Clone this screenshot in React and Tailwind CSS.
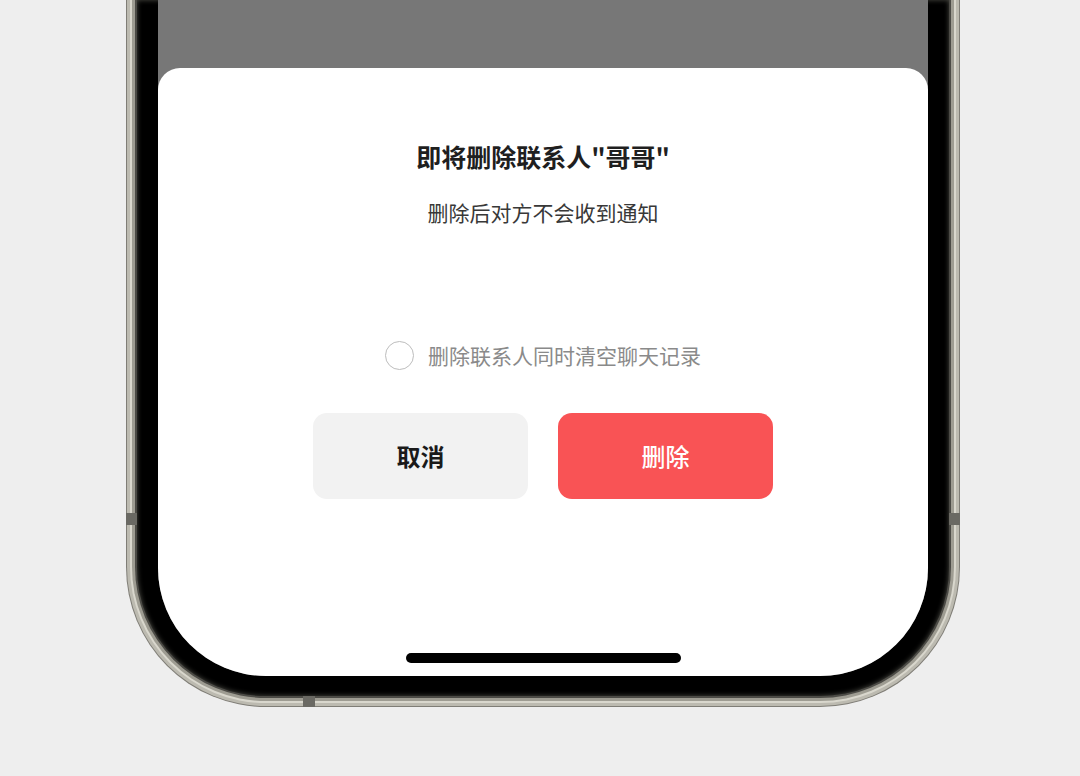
import React from 'react';

const Antenna = ({ className }) => (
    <div className={`absolute bg-[#6a6963] ${className}`}></div>
);

const DeleteSheet = () => {
    return (
        <div className="flex flex-col flex-1 items-center bg-white rounded-t-[22px] pt-[72px]">
            {/* Title */}
            <h1 className="text-[25px] leading-[32px] font-bold text-[#1f1f1f]">即将删除联系人"哥哥"</h1>
            <p className="mt-[26px] text-[21px] leading-[28px] text-[#383838]">删除后对方不会收到通知</p>

            {/* Option */}
            <label className="flex items-center gap-[14px] mt-[114px] h-[30px]">
                <span className="block w-[29px] h-[29px] rounded-full border-[1.5px] border-[#bdbdbd]"></span>
                <span className="text-[21px] leading-[30px] text-[#8a8a8a]">删除联系人同时清空聊天记录</span>
            </label>

            {/* Buttons */}
            <div className="flex gap-[30px] mt-[43px]">
                <button className="w-[215px] h-[86px] rounded-[14px] bg-[#f2f2f2] text-[24px] font-bold text-[#1a1a1a]">
                    取消
                </button>
                <button className="w-[215px] h-[86px] rounded-[14px] bg-[#f95355] text-[24px] font-medium text-white">
                    删除
                </button>
            </div>

            {/* Home indicator */}
            <div className="mt-auto mb-[13px] w-[275px] h-[10px] rounded-full bg-black"></div>
        </div>
    );
};

export default function App() {
    return (
        <div className="w-[1080px] h-[776px] overflow-hidden bg-[#eeeeee] font-['Noto_Sans_CJK_SC','Liberation_Sans',sans-serif]">
            <div className="relative ml-[126px] w-[834px] h-[707px]">
                {/* metal frame layers */}
                <div className="h-full px-px pb-px bg-[#7f7d76] rounded-b-[140px]">
                    <div className="h-full px-[3px] pb-[3px] bg-[#bcbab0] rounded-b-[139px]">
                        <div className="h-full px-[2px] pb-[2px] bg-[#d9d7cd] rounded-b-[136px]">
                            <div className="h-full px-[3px] pb-[3px] bg-[#9e9c92] rounded-b-[134px]">
                                <div className="h-full px-[2px] pb-[2px] bg-[#4c4b46] rounded-b-[131px]">
                                    {/* bezel */}
                                    <div className="h-full px-[21px] pb-[20px] bg-black rounded-b-[129px] shadow-[inset_0_0_5px_rgba(110,110,100,0.7)]">
                                        {/* screen */}
                                        <div className="flex flex-col h-full bg-[#777777] rounded-b-[108px] overflow-hidden">
                                            <div className="h-[68px] shrink-0"></div>
                                            <DeleteSheet />
                                        </div>
                                    </div>
                                </div>
                            </div>
                        </div>
                    </div>
                </div>

                {/* antenna bands */}
                <Antenna className="left-0 top-[513px] w-[11px] h-[12px]" />
                <Antenna className="right-0 top-[513px] w-[11px] h-[12px]" />
                <Antenna className="bottom-0 left-[177px] w-[12px] h-[11px]" />
            </div>
        </div>
    );
}
